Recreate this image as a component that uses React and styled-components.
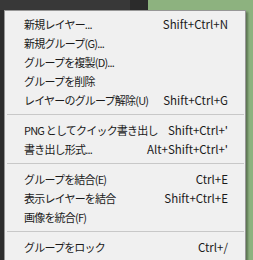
import React from 'react';
import styled, { createGlobalStyle } from 'styled-components';

const Global = createGlobalStyle`
  html, body {
    margin: 0;
    padding: 0;
    width: 253px;
    height: 260px;
    overflow: hidden;
  }
`;

const Screen = styled.div`
  position: relative;
  width: 253px;
  height: 260px;
  display: flex;
  flex-direction: row;
  overflow: hidden;
  font-family: "Noto Sans CJK JP", "Noto Sans", sans-serif;
`;

const Panel = styled.div`
  width: 148px;
  display: flex;
  flex-direction: row;
  background-color: #2d2d2d;
`;

const PanelPart = styled.div`
  width: ${props => props.width}px;
  height: 10px;
  background-color: ${props => props.color};
`;

const Canvas = styled.div`
  flex: 1;
  background-color: #8db27f;
`;

const Menu = styled.div`
  position: absolute;
  left: 4px;
  top: 10px;
  width: 240px;
  padding: 3px 0;
  background-color: #f0f0f0;
  border: 1px solid #979797;
  box-shadow: 2px 2px 2px rgba(0, 0, 0, 0.35);
  display: flex;
  flex-direction: column;
`;

const Item = styled.div`
  height: 19px;
  display: flex;
  flex-direction: row;
  align-items: center;
  justify-content: space-between;
  padding: 0 17px 0 19px;
  color: #1a1a1a;
  white-space: nowrap;
`;

const Label = styled.span`
  font-size: 11px;
  letter-spacing: -0.8px;
`;

const Shortcut = styled.span`
  font-size: 11.5px;
`;

const Separator = styled.div`
  height: 1px;
  margin: 5px 1px 5px 2px;
  background-color: #c8c8c8;
`;

const groups = [
  [
    ['新規レイヤー...', 'Shift+Ctrl+N'],
    ['新規グループ(G)...', ''],
    ['グループを複製(D)...', ''],
    ['グループを削除', ''],
    ['レイヤーのグループ解除(U)', 'Shift+Ctrl+G'],
  ],
  [
    ['PNG としてクイック書き出し', "Shift+Ctrl+'"],
    ['書き出し形式...', "Alt+Shift+Ctrl+'"],
  ],
  [
    ['グループを結合(E)', 'Ctrl+E'],
    ['表示レイヤーを結合', 'Shift+Ctrl+E'],
    ['画像を統合(F)', ''],
  ],
  [
    ['グループをロック', 'Ctrl+/'],
    ['グループの表示', ''],
  ],
];

const App = () => {
  return (
    <Screen>
      <Global />
      <Panel>
        <PanelPart width={130} color="#383838" />
        <PanelPart width={18} color="#2b2b2b" />
      </Panel>
      <Canvas />
      <Menu>
        {groups.map((group, gi) => (
          <React.Fragment key={gi}>
            {gi > 0 && <Separator />}
            {group.map(([label, key]) => (
              <Item key={label}>
                <Label>{label}</Label>
                <Shortcut>{key}</Shortcut>
              </Item>
            ))}
          </React.Fragment>
        ))}
      </Menu>
    </Screen>
  );
};

export default App;
